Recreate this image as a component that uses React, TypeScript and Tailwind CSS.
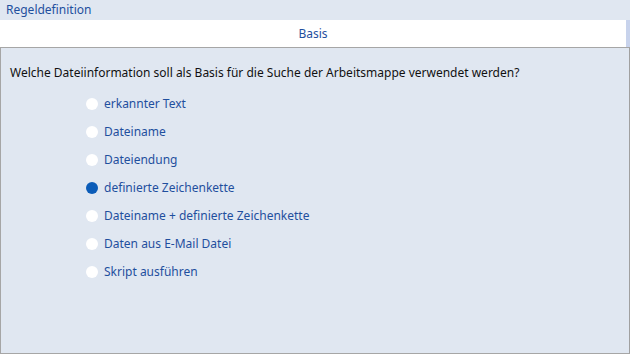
import { useState } from 'react';

const options = [
  'erkannter Text',
  'Dateiname',
  'Dateiendung',
  'definierte Zeichenkette',
  'Dateiname + definierte Zeichenkette',
  'Daten aus E-Mail Datei',
  'Skript ausführen',
];

export default function App() {
  const [sel, setSel] = useState(3);
  return (
    <div className="w-[630px] h-[354px] bg-[#e0e7f1] flex flex-col text-[12px]" style={{ fontFamily: '"Noto Sans", "Open Sans", sans-serif' }}>
      <div className="h-[20px] flex items-center px-[6px] text-[#1f4f9e]">Regeldefinition</div>
      <div className="h-[27px] flex">
        <div className="flex-1 bg-white flex items-center justify-center text-[#1f4f9e]">Basis</div>
        <div className="w-[4px] bg-[#c8d3ec]" />
      </div>
      <div className="flex-1 border border-[#a6a6a6] border-r-[#a0a0a0] flex flex-col">
        <div className="pt-[16px] pl-[9px] text-[#111]">Welche Dateiinformation soll als Basis für die Suche der Arbeitsmappe verwendet werden?</div>
        <div className="flex flex-col pl-[85px] pt-[13px] gap-[10px]">
          {options.map((o, i) => (
            <button key={o} onClick={() => setSel(i)} className="flex items-center h-[18px] gap-[6px] text-[#1f4f9e] text-left">
              <span className={`w-[12px] h-[12px] rounded-full ${sel === i ? 'bg-[#0b5cb8]' : 'bg-white'}`} />
              <span>{o}</span>
            </button>
          ))}
        </div>
      </div>
    </div>
  );
}
